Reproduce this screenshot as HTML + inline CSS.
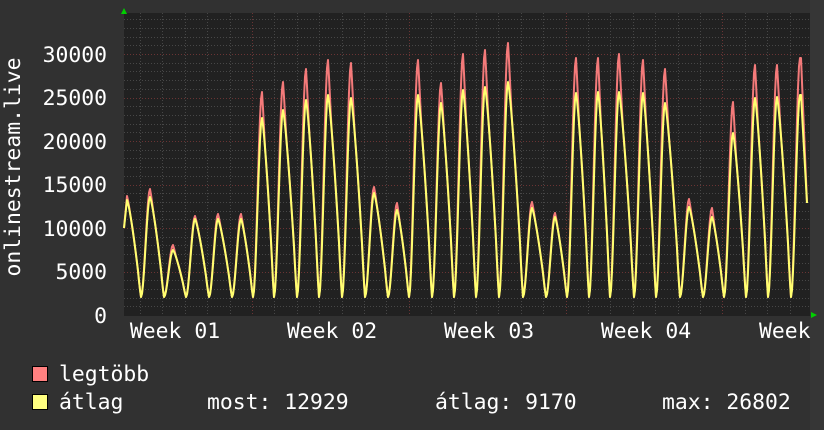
<!DOCTYPE html>
<html><head><meta charset="utf-8"><style>
html,body{margin:0;padding:0;background:#313131;}
svg{display:block}
text{font-family:"DejaVu Sans Mono","Liberation Mono",monospace;font-size:21.4px;fill:#fff}
</style></head><body>
<svg id="g" width="824" height="430" xmlns="http://www.w3.org/2000/svg">
<rect x="0" y="0" width="824" height="430" fill="#313131"/>
<rect x="810" y="0" width="14" height="430" fill="#363636"/>
<rect x="124" y="13" width="686" height="303" fill="#212121"/>
<g id="grid"></g>
<g id="lines"></g>
<polygon points="121,14 127,14 124,8" fill="#00d000"/>
<polygon points="811,312 811,318 817,315" fill="#00d000"/>
<text x="107" y="62" text-anchor="end">30000</text>
<text x="107" y="105" text-anchor="end">25000</text>
<text x="107" y="149" text-anchor="end">20000</text>
<text x="107" y="192" text-anchor="end">15000</text>
<text x="107" y="236" text-anchor="end">10000</text>
<text x="107" y="279" text-anchor="end">5000</text>
<text x="107" y="323" text-anchor="end">0</text>
<text transform="translate(20,167) rotate(-90)" text-anchor="middle">onlinestream.live</text>
<text x="175" y="338" text-anchor="middle">Week 01</text>
<text x="332" y="338" text-anchor="middle">Week 02</text>
<text x="489" y="338" text-anchor="middle">Week 03</text>
<text x="646" y="338" text-anchor="middle">Week 04</text>
<text x="759" y="338">Week</text>
<rect x="32.5" y="366.5" width="15" height="15" fill="#ff8080" stroke="#000"/>
<rect x="32.5" y="394.5" width="15" height="15" fill="#ffff80" stroke="#000"/>
<text x="59" y="381">legtöbb</text>
<text x="59" y="409">átlag</text>
<text x="207" y="409">most: 12929</text>
<text x="435" y="409">átlag: 9170</text>
<text x="662" y="409">max: 26802</text>
</svg>
<script>
var NS="http://www.w3.org/2000/svg";
var grid=document.getElementById('grid'),lines=document.getElementById('lines');
function ln(x1,y1,x2,y2,c){var l=document.createElementNS(NS,'line');l.setAttribute('x1',x1);l.setAttribute('y1',y1);l.setAttribute('x2',x2);l.setAttribute('y2',y2);l.setAttribute('stroke',c);l.setAttribute('stroke-dasharray','1,2');l.setAttribute('stroke-width','1');grid.appendChild(l);}
for(var v=1000;v<=34000;v+=1000){var y=Math.round(315-v*43.5/5000)+0.5;if(y<13)break;ln(124,y,810,y,v%5000==0?'#6a3434':'#474747');}
for(var k=-6;k<30;k++){var x=252+k*22.4;if(x<125||x>809)continue;var xr=Math.round(x)+0.5;ln(xr,13,xr,316,(k%7==0)?'#6a3434':'#474747');}
var P=[[127,196,200],[150,189,197],[173,245,250],[195,216,219],[218,214,219],[241,214,219],
[262,92,118],[283,82,110],[306,69,100],[328,60,95],[351,63,98],[374,187,193],[397,203,210],
[418,60,95],[441,83,103],[463,54,90],[485,50,87],[508,43,82],[532,202,208],[555,213,217],
[576,58,93],[598,58,92],[619,54,92],[643,60,93],[665,69,103],[689,199,207],[712,208,217],
[733,102,133],[755,65,98],[777,65,97],[800,58,95],[823,200,205]];
function val(x,idx){
  if(x>=801){var t=(x-801)/6;return P[30][idx]+(203-P[30][idx])*t;}
  for(var i=0;i<P.length;i++){
    var p=P[i];var tr=p[0]-9;
    if(x<=p[0]){
      var base=297;
      if(i==0){var t=(x-124)/3;return 228+(p[idx]-228)*Math.min(1,t);}
      if(x<tr){
        var q=P[i-1];var t=(x-q[0])/(tr-q[0]);
        var f=1-Math.pow(t,1.3);
        if(t>0.8){var u=(t-0.8)/0.2;f=f*(1-u*0.3);}
        var pk=q[idx];if(idx==1){pk=q[1]+(q[2]-q[1])*Math.min(1,t*4);}
        return base+(pk-base)*f;
      }
      var t=(x-tr)/(p[0]-tr);var s=t*t*(3-2*t);return base+(p[idx]-base)*s;
    }
  }
  return 297;
}
function path(idx,col){
  var d='';for(var x=124;x<=807;x++){d+=(x==124?'M':'L')+x+','+val(x,idx).toFixed(1);}
  var p=document.createElementNS(NS,'path');p.setAttribute('d',d);p.setAttribute('fill','none');p.setAttribute('stroke',col);p.setAttribute('stroke-width','2');p.setAttribute('stroke-linejoin','round');lines.appendChild(p);
}
path(1,'#f47a7a');path(2,'#ffff70');
</script>
</body></html>
